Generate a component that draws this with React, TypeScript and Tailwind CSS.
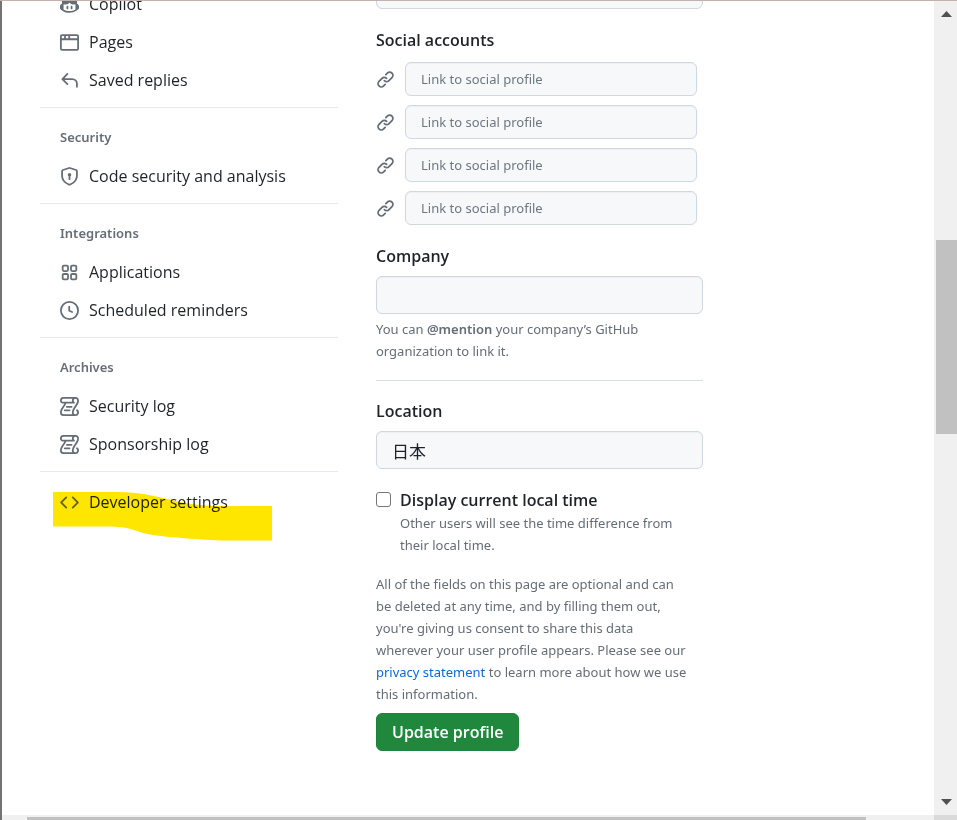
import type { ReactNode } from "react";

const ICONS = {
  copilot: [
    "M7.998 15.035c-4.562 0-7.873-2.914-7.998-3.749V9.338c.085-.628.677-1.686 1.588-2.065.013-.07.024-.143.036-.218.029-.183.06-.384.126-.612-.201-.508-.254-1.084-.254-1.656 0-.87.128-1.769.693-2.484.579-.733 1.494-1.124 2.724-1.261 1.206-.134 2.262.034 2.944.765.05.053.096.108.139.165.044-.057.094-.112.143-.165.682-.731 1.738-.899 2.944-.765 1.23.137 2.145.528 2.724 1.261.566.715.693 1.614.693 2.484 0 .572-.053 1.148-.254 1.656.066.228.098.429.126.612.012.076.024.148.037.218.924.385 1.522 1.471 1.591 2.095v1.872c0 .766-3.351 3.795-8.002 3.795Zm0-1.485c2.28 0 4.584-1.11 5.002-1.433V7.862l-.023-.116c-.49.21-1.075.291-1.727.291-1.146 0-2.059-.327-2.71-.991A3.222 3.222 0 0 1 8 6.303a3.24 3.24 0 0 1-.544.743c-.65.664-1.563.991-2.71.991-.652 0-1.236-.081-1.727-.291l-.023.116v4.255c.419.323 2.722 1.433 5.002 1.433Z",
    "M6.25 9.037a.75.75 0 0 1 .75.75v1.501a.75.75 0 0 1-1.5 0V9.787a.75.75 0 0 1 .75-.75Zm4.25.75v1.501a.75.75 0 0 1-1.5 0V9.787a.75.75 0 0 1 1.5 0Z",
  ],
  browser: [
    "M0 2.75C0 1.784.784 1 1.75 1h12.5c.966 0 1.75.784 1.75 1.75v10.5A1.75 1.75 0 0 1 14.25 15H1.75A1.75 1.75 0 0 1 0 13.25ZM14.5 6h-13v7.25c0 .138.112.25.25.25h12.5a.25.25 0 0 0 .25-.25Zm-6-3.5v2h6V2.75a.25.25 0 0 0-.25-.25ZM5 2.5v2h2v-2Zm-3.25 0a.25.25 0 0 0-.25.25V4.5h2v-2Z",
  ],
  reply: [
    "M6.78 1.97a.75.75 0 0 1 0 1.06L3.81 6h6.44A4.75 4.75 0 0 1 15 10.75v2.5a.75.75 0 0 1-1.5 0v-2.5a3.25 3.25 0 0 0-3.25-3.25H3.81l2.97 2.97a.749.749 0 0 1-.326 1.275.749.749 0 0 1-.734-.215L1.47 7.28a.75.75 0 0 1 0-1.06l4.25-4.25a.75.75 0 0 1 1.06 0Z",
  ],
  shield: [
    "m8.533.133 5.25 1.68A1.75 1.75 0 0 1 15 3.48V7c0 1.566-.32 3.182-1.303 4.682-.983 1.498-2.585 2.813-5.032 3.855a1.697 1.697 0 0 1-1.33 0c-2.447-1.042-4.049-2.357-5.032-3.855C1.32 10.182 1 8.566 1 7V3.48a1.75 1.75 0 0 1 1.217-1.667l5.25-1.68a1.748 1.748 0 0 1 1.066 0Zm-.61 1.429.001.001-5.25 1.68a.251.251 0 0 0-.174.237V7c0 1.36.275 2.666 1.057 3.859.784 1.194 2.121 2.342 4.366 3.298a.196.196 0 0 0 .154 0c2.245-.957 3.582-2.103 4.366-3.297C13.225 9.666 13.5 8.358 13.5 7V3.48a.25.25 0 0 0-.174-.238l-5.25-1.68a.25.25 0 0 0-.153 0ZM9.5 6.5c0 .536-.286 1.032-.75 1.3v2.45a.75.75 0 0 1-1.5 0V7.8A1.5 1.5 0 1 1 9.5 6.5Z",
  ],
  apps: [
    "M1.5 3.25c0-.966.784-1.75 1.75-1.75h2.5c.966 0 1.75.784 1.75 1.75v2.5A1.75 1.75 0 0 1 5.75 7.5h-2.5A1.75 1.75 0 0 1 1.5 5.75Zm7 0c0-.966.784-1.75 1.75-1.75h2.5c.966 0 1.75.784 1.75 1.75v2.5a1.75 1.75 0 0 1-1.75 1.75h-2.5A1.75 1.75 0 0 1 8.5 5.75Zm-7 7c0-.966.784-1.75 1.75-1.75h2.5c.966 0 1.75.784 1.75 1.75v2.5a1.75 1.75 0 0 1-1.75 1.75h-2.5a1.75 1.75 0 0 1-1.75-1.75Zm7 0c0-.966.784-1.75 1.75-1.75h2.5c.966 0 1.75.784 1.75 1.75v2.5a1.75 1.75 0 0 1-1.75 1.75h-2.5a1.75 1.75 0 0 1-1.75-1.75ZM3.25 3a.25.25 0 0 0-.25.25v2.5c0 .138.112.25.25.25h2.5A.25.25 0 0 0 6 5.75v-2.5A.25.25 0 0 0 5.75 3Zm7 0a.25.25 0 0 0-.25.25v2.5c0 .138.112.25.25.25h2.5a.25.25 0 0 0 .25-.25v-2.5a.25.25 0 0 0-.25-.25Zm-7 7a.25.25 0 0 0-.25.25v2.5c0 .138.112.25.25.25h2.5a.25.25 0 0 0 .25-.25v-2.5a.25.25 0 0 0-.25-.25Zm7 0a.25.25 0 0 0-.25.25v2.5c0 .138.112.25.25.25h2.5a.25.25 0 0 0 .25-.25v-2.5a.25.25 0 0 0-.25-.25Z",
  ],
  clock: [
    "M8 0a8 8 0 1 1 0 16A8 8 0 0 1 8 0ZM1.5 8a6.5 6.5 0 1 0 13 0 6.5 6.5 0 0 0-13 0Zm7-3.25v2.992l2.028.812a.75.75 0 0 1-.557 1.392l-2.5-1A.751.751 0 0 1 7 8.25v-3.5a.75.75 0 0 1 1.5 0Z",
  ],
  log: [
    "M5 8.25a.75.75 0 0 1 .75-.75h4a.75.75 0 0 1 0 1.5h-4A.75.75 0 0 1 5 8.25ZM4 10.5A.75.75 0 0 0 4 12h4a.75.75 0 0 0 0-1.5H4Z",
    "M13-.005c1.654 0 3 1.328 3 3 0 .982-.338 1.933-.783 2.818-.443.879-1.028 1.758-1.582 2.588l-.011.017c-.568.853-1.104 1.659-1.501 2.446-.398.789-.623 1.494-.623 2.136a1.5 1.5 0 1 0 2.333-1.248.75.75 0 0 1 .834-1.246A3 3 0 0 1 13 16H3a3 3 0 0 1-3-3c0-1.582.891-3.135 1.777-4.506.209-.322.418-.637.623-.946.473-.709.923-1.386 1.287-2.048H2.51c-.576 0-1.381-.133-1.907-.783A2.68 2.68 0 0 1 0 2.995a3 3 0 0 1 3-3Zm0 1.5a1.5 1.5 0 0 0-1.5 1.5c0 .476.223.834.667 1.132A.75.75 0 0 1 11.75 5.5H5.368c-.467 1.003-1.141 2.015-1.773 2.963-.192.289-.381.571-.558.845C2.13 10.711 1.5 11.916 1.5 13A1.5 1.5 0 0 0 3 14.5h7.401A2.989 2.989 0 0 1 10 13c0-.979.338-1.928.784-2.812.441-.874 1.023-1.748 1.575-2.576l.017-.026c.568-.853 1.103-1.658 1.501-2.448.398-.79.623-1.497.623-2.143 0-.838-.669-1.5-1.5-1.5Zm-10 0a1.5 1.5 0 0 0-1.5 1.5c0 .321.1.569.27.778.097.12.325.227.74.227h7.674A2.737 2.737 0 0 1 10 2.995c0-.546.146-1.059.401-1.5Z",
  ],
  code: [
    "m11.28 3.22 4.25 4.25a.75.75 0 0 1 0 1.06l-4.25 4.25a.749.749 0 0 1-1.275-.326.749.749 0 0 1 .215-.734L13.94 8l-3.72-3.72a.749.749 0 0 1 .326-1.275.749.749 0 0 1 .734.215Zm-6.56 0a.751.751 0 0 1 1.042.018.751.751 0 0 1 .018 1.042L2.06 8l3.72 3.72a.749.749 0 0 1-.326 1.275.749.749 0 0 1-.734-.215L.47 8.53a.75.75 0 0 1 0-1.06Z",
  ],
  link: [
    "m7.775 3.275 1.25-1.25a3.5 3.5 0 1 1 4.95 4.95l-2.5 2.5a3.5 3.5 0 0 1-4.95 0 .751.751 0 0 1 .018-1.042.751.751 0 0 1 1.042-.018 1.998 1.998 0 0 0 2.83 0l2.5-2.5a2.002 2.002 0 0 0-2.83-2.83l-1.25 1.25a.751.751 0 0 1-1.042-.018.751.751 0 0 1-.018-1.042Zm-4.69 9.64a1.998 1.998 0 0 0 2.83 0l1.25-1.25a.751.751 0 0 1 1.042.018.751.751 0 0 1 .018 1.042l-1.25 1.25a3.5 3.5 0 1 1-4.95-4.95l2.5-2.5a3.5 3.5 0 0 1 4.95 0 .751.751 0 0 1-.018 1.042.751.751 0 0 1-1.042.018 1.998 1.998 0 0 0-2.83 0l-2.5 2.5a1.998 1.998 0 0 0 0 2.83Z",
  ],
};

type IconName = keyof typeof ICONS;

function Icon({ name }: { name: IconName }) {
  return (
    <svg
      viewBox="0 0 16 16"
      className="w-[19px] h-[19px] shrink-0 fill-[#656d76]"
      aria-hidden="true"
    >
      {ICONS[name].map((d) => (
        <path key={d} d={d} />
      ))}
    </svg>
  );
}

type Item = { icon: IconName; text: string };

const sections: { title: string; items: Item[] }[] = [
  {
    title: "Security",
    items: [{ icon: "shield", text: "Code security and analysis" }],
  },
  {
    title: "Integrations",
    items: [
      { icon: "apps", text: "Applications" },
      { icon: "clock", text: "Scheduled reminders" },
    ],
  },
  {
    title: "Archives",
    items: [
      { icon: "log", text: "Security log" },
      { icon: "log", text: "Sponsorship log" },
    ],
  },
];

function NavItem({ icon, text }: Item) {
  return (
    <li>
      <a href="#" className="flex items-center gap-[10px] h-[38px] px-5 text-base">
        <Icon name={icon} />
        {text}
      </a>
    </li>
  );
}

function NavSection({ title, children }: { title?: string; children: ReactNode }) {
  return (
    <section className="mt-2 pt-[11px] border-t border-[#e7eaed]">
      {title && (
        <h3 className="flex items-center h-[38px] px-5 text-[13px] font-['Noto_Sans',sans-serif] font-semibold text-[#656d76]">
          {title}
        </h3>
      )}
      <ul>{children}</ul>
    </section>
  );
}

const fieldClass =
  "block w-full rounded-md border border-[#d0d7de] bg-[#f6f8fa] px-[15px] placeholder:text-[#6e7781] shadow-[inset_0_1px_0_rgba(208,215,222,0.2)]";

const noteClass =
  "text-[13px] leading-[22px] text-[#656d76] font-['Noto_Sans',sans-serif]";

function Field({ id, label, value }: { id: string; label: string; value?: string }) {
  return (
    <>
      <label htmlFor={id} className="block mb-2 text-base leading-6 font-semibold">
        {label}
      </label>
      <input id={id} defaultValue={value} className={`${fieldClass} h-[38px] text-[17px]`} />
    </>
  );
}

export default function App() {
  return (
    <div className="flex flex-col h-screen overflow-hidden border-t border-t-[#c4b1ae] bg-white text-[#1f2328] font-['Open_Sans','Noto_Sans_CJK_JP',sans-serif]">

      <div className="flex flex-1 min-h-0">

        <div className="w-[2px] shrink-0 bg-[#737373]" />

        {/* PAGE */}
        <div className="flex flex-1 min-w-0 gap-[38px] pl-[38px] overflow-hidden">

          {/* SIDEBAR */}
          <nav className="w-[298px] shrink-0 -mt-4">
            <ul>
              <NavItem icon="copilot" text="Copilot" />
              <NavItem icon="browser" text="Pages" />
              <NavItem icon="reply" text="Saved replies" />
            </ul>

            {sections.map((section) => (
              <NavSection key={section.title} title={section.title}>
                {section.items.map((item) => (
                  <NavItem key={item.text} {...item} />
                ))}
              </NavSection>
            ))}

            <div className="relative">
              <NavSection>
                <NavItem icon="code" text="Developer settings" />
              </NavSection>

              {/* MARKER STROKE */}
              <svg
                viewBox="0 0 220 50"
                className="absolute left-[13px] top-[21px] w-[220px] h-[50px] mix-blend-multiply pointer-events-none"
                aria-hidden="true"
              >
                <path
                  d="M0 0H64C88 0 100 4 119 8C134 12 150 14 172 14H219V48.500H172C150 48 112 45 97 42.500C84 40 78 35 58 34.500H0Z"
                  fill="#ffe600"
                />
              </svg>
            </div>
          </nav>

          {/* PROFILE FORM */}
          <form className="flex-1 max-w-[327px] -mt-[30px]">
            <input aria-label="URL" className={`${fieldClass} h-[38px] text-[17px]`} />

            <fieldset className="mt-[19px]">
              <legend className="mb-[10px] text-base leading-6 font-semibold">
                Social accounts
              </legend>
              <div className="flex flex-col gap-[9px] pr-[6px]">
                {[1, 2, 3, 4].map((n) => (
                  <div key={n} className="flex items-center gap-[10px]">
                    <Icon name="link" />
                    <input
                      aria-label={`Link to social profile ${n}`}
                      placeholder="Link to social profile"
                      className={`${fieldClass} h-[34px] text-[13px] font-['Noto_Sans',sans-serif]`}
                    />
                  </div>
                ))}
              </div>
            </fieldset>

            <div className="mt-[19px]">
              <Field id="company" label="Company" />
              <p className={`mt-1 ${noteClass}`}>
                You can <strong className="font-semibold">@mention</strong> your
                company’s GitHub organization to link it.
              </p>
            </div>

            <hr className="mt-[18px] mb-[18px] border-[#d8dee4]" />

            <Field id="location" label="Location" value="日本" />

            <div className="flex mt-[19px] gap-[9px]">
              <input
                id="local-time"
                type="checkbox"
                className="appearance-none w-[15px] h-[15px] mt-1 shrink-0 rounded-[3px] border border-[#767676] bg-white"
              />
              <div>
                <label htmlFor="local-time" className="block text-base leading-6 font-semibold">
                  Display current local time
                </label>
                <p className={noteClass}>
                  Other users will see the time difference from
                  <br />
                  their local time.
                </p>
              </div>
            </div>

            <p className={`mt-[17px] mb-2 ${noteClass}`}>
              All of the fields on this page are optional and can
              <br />
              be deleted at any time, and by filling them out,
              <br />
              you're giving us consent to share this data
              <br />
              wherever your user profile appears. Please see our
              <br />
              <a href="#" className="text-[#0969da]">privacy statement</a> to
              learn more about how we use
              <br />
              this information.
            </p>

            <button
              type="button"
              className="h-[38px] px-[15px] rounded-md border border-[#1f823b] bg-[#1f883d] text-base font-semibold text-white"
            >
              Update profile
            </button>
          </form>

        </div>

        {/* VERTICAL SCROLLBAR */}
        <div className="flex flex-col items-center w-[23px] shrink-0 pl-[2px] pt-[10px] pb-[10px] bg-[#f0f0f0]">
          <svg viewBox="0 0 11 6" className="w-[11px] h-[6px] fill-[#505050]" aria-hidden="true">
            <path d="M0 6 5.500 0 11 6Z" />
          </svg>
          <div className="basis-[223px]" />
          <div className="w-full h-[194px] bg-[#c1c1c1]" />
          <div className="flex-1" />
          <svg viewBox="0 0 11 6" className="w-[11px] h-[6px] fill-[#505050]" aria-hidden="true">
            <path d="M0 0H11L5.500 6Z" />
          </svg>
        </div>

      </div>

      {/* HORIZONTAL SCROLLBAR */}
      <div className="flex h-[5px] shrink-0">
        <div className="w-[2px] bg-[#737373]" />
        <div className="flex-1 pt-[2px] pl-[25px] pr-[68px] bg-[#f0f0f0]">
          <div className="h-full bg-[#c1c1c1]" />
        </div>
        <div className="w-[23px] bg-[#dadada]" />
      </div>

    </div>
  );
}
